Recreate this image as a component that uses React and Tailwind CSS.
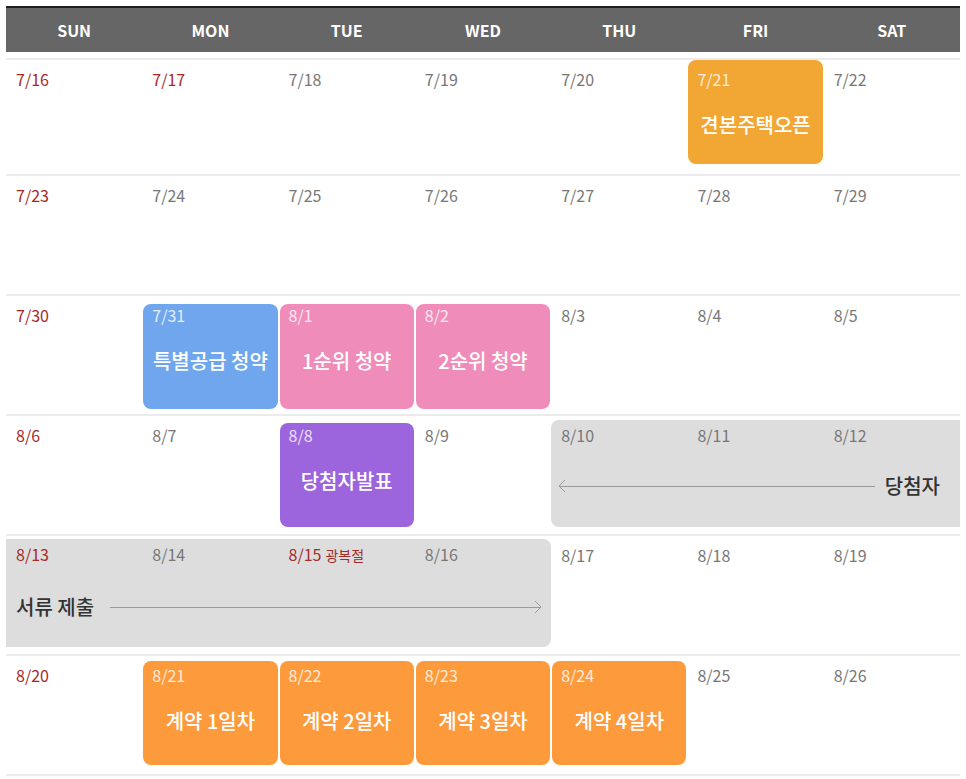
import React from "react";

const FONT = { fontFamily: '"Noto Sans CJK KR", "Noto Sans", sans-serif' };

function Plain({ d, red }) {
  return (
    <div className={`pl-[10px] pt-[8px] text-[16px] leading-[22px] ${red ? "text-[#a52a2a]" : "text-[#777777]"}`}>
      {d}
    </div>
  );
}

function Box({ d, title, bg, mt, h, pt }) {
  return (
    <div className={`mx-px self-start rounded-[8px] ${bg} ${mt} ${h}`}>
      <div className={`pl-[9px] ${pt} text-[16px] leading-[22px] text-white/80`}>{d}</div>
      <div className="mt-[22px] text-center text-[20px] leading-[26px] font-medium text-white">{title}</div>
    </div>
  );
}

function Row({ children, h = "h-[120px]" }) {
  return <div className={`grid grid-cols-7 border-t-2 border-[#ebebeb] ${h}`}>{children}</div>;
}

function ArrowLeft() {
  return (
    <svg width="8" height="14" viewBox="0 0 8 14" className="shrink-0">
      <path d="M7 1 L1 7 L7 13" fill="none" stroke="#9a9a9a" strokeWidth="1" />
    </svg>
  );
}
function ArrowRight() {
  return (
    <svg width="8" height="14" viewBox="0 0 8 14" className="shrink-0">
      <path d="M1 1 L7 7 L1 13" fill="none" stroke="#9a9a9a" strokeWidth="1" />
    </svg>
  );
}

export default function App() {
  const days = ["SUN", "MON", "TUE", "WED", "THU", "FRI", "SAT"];
  return (
    <div className="w-[966px] h-[779px] bg-white overflow-hidden" style={FONT}>
      <div className="ml-[6px] w-[954px] pt-[6px]">
        <div className="grid grid-cols-7 h-[46px] border-t-2 border-[#1e1e1e] bg-[#666666] mb-[6px]">
          {days.map((d) => (
            <div key={d} className="flex items-center justify-center text-[16px] font-bold text-white">
              {d}
            </div>
          ))}
        </div>

        {/* Row 1 */}
        <Row h="h-[116px]">
          <Plain d="7/16" red />
          <Plain d="7/17" red />
          <Plain d="7/18" />
          <Plain d="7/19" />
          <Plain d="7/20" />
          <Box d="7/21" title="견본주택오픈" bg="bg-[#f2a634]" mt="mt-0" h="h-[104px]" pt="pt-[8px]" />
          <Plain d="7/22" />
        </Row>

        {/* Row 2 */}
        <Row>
          <Plain d="7/23" red />
          <Plain d="7/24" />
          <Plain d="7/25" />
          <Plain d="7/26" />
          <Plain d="7/27" />
          <Plain d="7/28" />
          <Plain d="7/29" />
        </Row>

        {/* Row 3 */}
        <Row>
          <Plain d="7/30" red />
          <Box d="7/31" title="특별공급 청약" bg="bg-[#6fa6ed]" mt="mt-[8px]" h="h-[105px]" pt="pt-0" />
          <Box d="8/1" title="1순위 청약" bg="bg-[#ef8cb9]" mt="mt-[8px]" h="h-[105px]" pt="pt-0" />
          <Box d="8/2" title="2순위 청약" bg="bg-[#ef8cb9]" mt="mt-[8px]" h="h-[105px]" pt="pt-0" />
          <Plain d="8/3" />
          <Plain d="8/4" />
          <Plain d="8/5" />
        </Row>

        {/* Row 4 */}
        <Row>
          <Plain d="8/6" red />
          <Plain d="8/7" />
          <Box d="8/8" title="당첨자발표" bg="bg-[#9c64dd]" mt="mt-[7px]" h="h-[104px]" pt="pt-[1px]" />
          <Plain d="8/9" />
          <div className="col-span-3 self-start mt-[4px] h-[107px] rounded-l-[8px] bg-[#dddddd]">
            <div className="grid grid-cols-3">
              <div className="pl-[10px] pt-[4px] text-[16px] leading-[22px] text-[#777777]">8/10</div>
              <div className="pl-[10px] pt-[4px] text-[16px] leading-[22px] text-[#777777]">8/11</div>
              <div className="pl-[10px] pt-[4px] text-[16px] leading-[22px] text-[#777777]">8/12</div>
            </div>
            <div className="mt-[27px] flex items-center pl-[7px] pr-[20px] h-[26px]">
              <ArrowLeft />
              <div className="-ml-[7px] flex-1 h-px bg-[#9a9a9a]" />
              <div className="ml-[10px] text-[20px] leading-[26px] font-medium text-[#333333]">당첨자</div>
            </div>
          </div>
        </Row>

        {/* Row 5 */}
        <Row>
          <div className="col-span-4 self-start mt-[3px] h-[108px] rounded-r-[8px] bg-[#dddddd]">
            <div className="grid grid-cols-4">
              <div className="pl-[10px] pt-[4px] text-[16px] leading-[22px] text-[#a52a2a]">8/13</div>
              <div className="pl-[10px] pt-[4px] text-[16px] leading-[22px] text-[#777777]">8/14</div>
              <div className="pl-[10px] pt-[4px] text-[16px] leading-[22px] text-[#a52a2a]">
                8/15<span className="ml-[4px] text-[14px]">광복절</span>
              </div>
              <div className="pl-[10px] pt-[4px] text-[16px] leading-[22px] text-[#777777]">8/16</div>
            </div>
            <div className="mt-[28px] flex items-center pl-[10px] pr-[9px] h-[26px]">
              <div className="mr-[16px] text-[20px] leading-[26px] font-medium text-[#333333]">서류 제출</div>
              <div className="-mr-[7px] flex-1 h-px bg-[#9a9a9a]" />
              <ArrowRight />
            </div>
          </div>
          <Plain d="8/17" />
          <Plain d="8/18" />
          <Plain d="8/19" />
        </Row>

        {/* Row 6 */}
        <Row>
          <Plain d="8/20" red />
          <Box d="8/21" title="계약 1일차" bg="bg-[#fd9a3b]" mt="mt-[5px]" h="h-[104px]" pt="pt-[3px]" />
          <Box d="8/22" title="계약 2일차" bg="bg-[#fd9a3b]" mt="mt-[5px]" h="h-[104px]" pt="pt-[3px]" />
          <Box d="8/23" title="계약 3일차" bg="bg-[#fd9a3b]" mt="mt-[5px]" h="h-[104px]" pt="pt-[3px]" />
          <Box d="8/24" title="계약 4일차" bg="bg-[#fd9a3b]" mt="mt-[5px]" h="h-[104px]" pt="pt-[3px]" />
          <Plain d="8/25" />
          <Plain d="8/26" />
        </Row>
        <div className="border-t-2 border-[#ebebeb]" />
      </div>
    </div>
  );
}
